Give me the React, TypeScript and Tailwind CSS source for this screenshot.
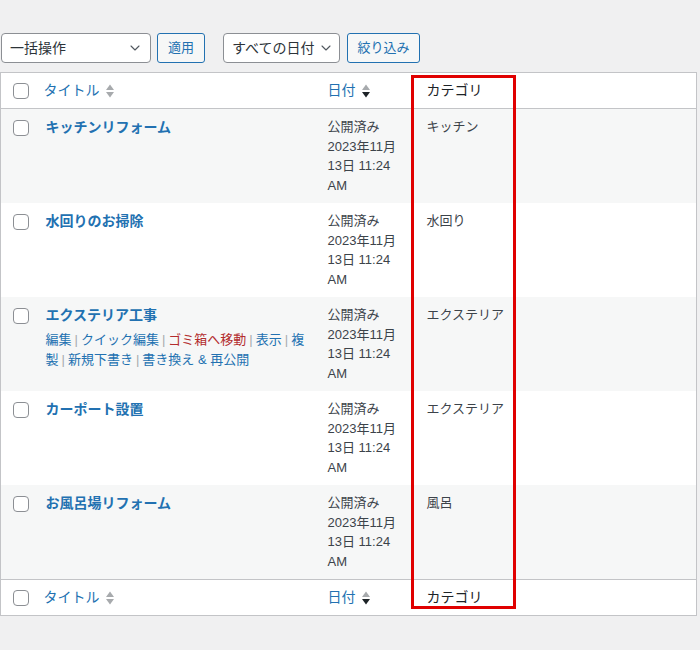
import { ChevronDown } from 'lucide-react'

// ── Data ──────────────────────────────────────────────────────────────────────

type Post = { title: string; category: string; actions?: boolean }

const POSTS: Post[] = [
  { title: 'キッチンリフォーム', category: 'キッチン' },
  { title: '水回りのお掃除', category: '水回り' },
  { title: 'エクステリア工事', category: 'エクステリア', actions: true },
  { title: 'カーポート設置', category: 'エクステリア' },
  { title: 'お風呂場リフォーム', category: '風呂' },
]

// ── Bits ──────────────────────────────────────────────────────────────────────

function Checkbox() {
  return <span className="block w-4 h-4 rounded-[4px] border border-[#8c8f94] bg-white" />
}

function SortIcon({ active }: { active?: boolean }) {
  return (
    <svg width="10" height="16" viewBox="0 0 10 16" className="ml-[5px] shrink-0">
      <path d="M5 1.5 L9 7 H1 Z" fill="#a7aaad" />
      <path d="M5 14.5 L9 9 H1 Z" fill={active ? '#1d2327' : '#a7aaad'} />
    </svg>
  )
}

function Select({ label, width }: { label: string; width: string }) {
  return (
    <div className={`${width} h-[30px] flex items-center justify-between pl-2 pr-[7px] gap-1 bg-white border border-[#8c8f94] rounded-[4px] text-[14px] text-[#2c3338] whitespace-nowrap`}>
      <span>{label}</span>
      <ChevronDown className="w-4 h-4 shrink-0 text-[#50575e]" strokeWidth={1.6} />
    </div>
  )
}

function Button({ label, width }: { label: string; width: string }) {
  return (
    <div className={`${width} h-[30px] flex items-center justify-center bg-[#f6f7f7] border border-[#2271b1] rounded-[3px] text-[13px] text-[#2271b1] whitespace-nowrap`}>
      {label}
    </div>
  )
}

function HeaderRow({ bottom }: { bottom?: boolean }) {
  return (
    <tr className={bottom ? 'border-t border-[#c3c4c7]' : 'border-b border-[#c3c4c7]'}>
      <th className="h-[36px] pl-3 align-middle">
        <Checkbox />
      </th>
      <th className="pl-[8px] text-left font-normal align-middle">
        <span className="flex items-center text-[14px] text-[#2271b1]">タイトル<SortIcon /></span>
      </th>
      <th className="pl-[10px] text-left font-normal align-middle">
        <span className="flex items-center text-[14px] text-[#2271b1]">日付<SortIcon active /></span>
      </th>
      <th className="pl-[10px] text-left font-normal align-middle text-[14px] text-[#1d2327]">カテゴリ</th>
    </tr>
  )
}

function RowActions() {
  const sep = <span className="text-[#a7aaad] px-[3px]">|</span>
  return (
    <div className="text-[13px] leading-[19.5px] text-[#2271b1] whitespace-nowrap">
      編集{sep}クイック編集{sep}<span className="text-[#b32d2e]">ゴミ箱へ移動</span>{sep}表示{sep}複
      <br />
      製{sep}新規下書き{sep}書き換え &amp; 再公開
    </div>
  )
}

// ── Page ──────────────────────────────────────────────────────────────────────

export default function App() {
  return (
    <div
      className="min-h-screen bg-[#f0f0f1] text-[#3c434a]"
      style={{ fontFamily: '"Liberation Sans", "Noto Sans CJK JP", sans-serif' }}
    >
      {/* Toolbar */}
      <div className="flex items-center pt-[33px] pl-px">
        <Select label="一括操作" width="w-[150px]" />
        <div className="ml-[6px]"><Button label="適用" width="w-[48px]" /></div>
        <div className="ml-[18px]"><Select label="すべての日付" width="w-[117px]" /></div>
        <div className="ml-[7px]"><Button label="絞り込み" width="w-[73px]" /></div>
      </div>

      {/* List table */}
      <div className="relative mt-[9px] w-[697px]">
        <table className="w-full table-fixed border-collapse bg-white border border-[#c3c4c7]">
          <colgroup>
            <col className="w-[35px]" />
            <col className="w-[282px]" />
            <col className="w-[99px]" />
            <col />
          </colgroup>
          <thead>
            <HeaderRow />
          </thead>
          <tbody>
            {POSTS.map((p, i) => (
              <tr key={p.title} className={i % 2 === 0 ? 'bg-[#f6f7f7]' : 'bg-white'}>
                <td className="pl-3 pt-[11px] align-top">
                  <Checkbox />
                </td>
                <td className="px-[10px] pt-[8px] align-top">
                  <div className="text-[14px] font-semibold leading-[20px] text-[#2271b1]">{p.title}</div>
                  {p.actions && <div className="mt-[5px]"><RowActions /></div>}
                </td>
                <td className="px-[10px] pt-[8px] pb-[8px] align-top text-[13px] leading-[19.5px] whitespace-nowrap">
                  公開済み<br />2023年11月<br />13日 11:24<br />AM
                </td>
                <td className="px-[10px] pt-[8px] align-top text-[13px] leading-[19.5px]">{p.category}</td>
              </tr>
            ))}
          </tbody>
          <tfoot>
            <HeaderRow bottom />
          </tfoot>
        </table>

        {/* Highlight around the category column */}
        <div className="absolute left-[411px] top-[3px] w-[105px] h-[534px] border-[3px] border-[#e00000] pointer-events-none" />
      </div>
    </div>
  )
}
